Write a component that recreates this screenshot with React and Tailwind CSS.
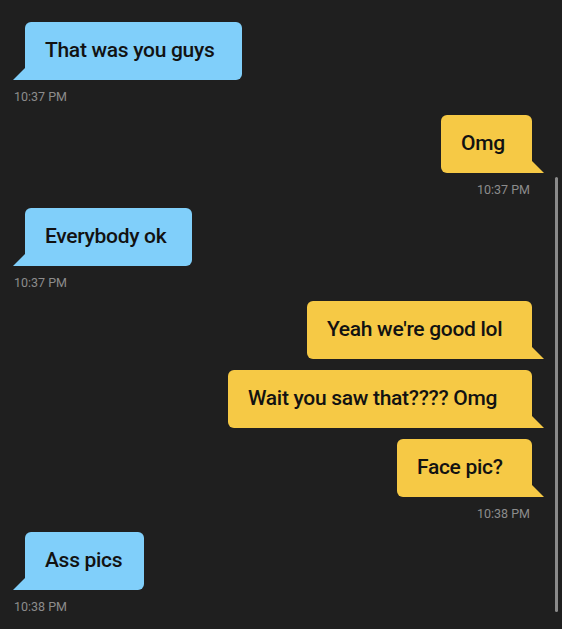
import React from "react";

const MESSAGES = [
  { side: "in", items: [{ text: "That was you guys", w: "w-[217px]" }], time: "10:37 PM" },
  { side: "out", items: [{ text: "Omg", w: "w-[91px]" }], time: "10:37 PM" },
  { side: "in", items: [{ text: "Everybody ok", w: "w-[167px]" }], time: "10:37 PM" },
  {
    side: "out",
    items: [
      { text: "Yeah we're good lol", w: "w-[225px]" },
      { text: "Wait you saw that???? Omg", w: "w-[304px]" },
      { text: "Face pic?", w: "w-[135px]" },
    ],
    time: "10:38 PM",
  },
  { side: "in", items: [{ text: "Ass pics", w: "w-[119px]" }], time: "10:38 PM" },
];

function Bubble({ text, w, side }) {
  const incoming = side === "in";
  return (
    <div
      className={`relative h-[58px] ${w} flex items-center pl-5 text-[21px] tracking-[-0.3px] font-medium text-[#121212] ${
        incoming
          ? "bg-[#80cffa] rounded-[6px] rounded-bl-none"
          : "bg-[#f6c945] rounded-[6px] rounded-br-none"
      }`}
    >
      {text}
      {incoming ? (
        <svg className="absolute -left-[12px] bottom-0" width="12" height="12" viewBox="0 0 12 12">
          <path d="M12 0 L12 12 L0 12 Z" fill="#80cffa" />
        </svg>
      ) : (
        <svg className="absolute -right-[12px] bottom-0" width="12" height="12" viewBox="0 0 12 12">
          <path d="M0 0 L0 12 L12 12 Z" fill="#f6c945" />
        </svg>
      )}
    </div>
  );
}

export default function App() {
  return (
    <div
      className="relative w-[562px] h-[629px] overflow-hidden bg-[#1f1f1f] pt-[22px]"
      style={{ fontFamily: "Roboto, 'Noto Sans', sans-serif" }}
    >
      <div className="flex flex-col">
        {MESSAGES.map((g, gi) => (
          <div
            key={gi}
            className={`flex flex-col ${gi > 0 ? "mt-[10px]" : ""} ${
              g.side === "in" ? "items-start" : "items-end"
            }`}
          >
            <div className={`flex flex-col gap-[11px] ${g.side === "in" ? "ml-[25px] items-start" : "mr-[30px] items-end"}`}>
              {g.items.map((m, i) => (
                <Bubble key={i} text={m.text} w={m.w} side={g.side} />
              ))}
            </div>
            <div
              className={`mt-[9px] text-[12.5px] leading-4 text-[#8c8c8c] ${
                g.side === "in" ? "ml-[14px]" : "mr-[32px]"
              }`}
            >
              {g.time}
            </div>
          </div>
        ))}
      </div>
      {/* scrollbar */}
      <div className="absolute left-[555px] top-[177px] w-[3px] h-[435px] rounded-full bg-[#8a8a8a]" />
    </div>
  );
}
